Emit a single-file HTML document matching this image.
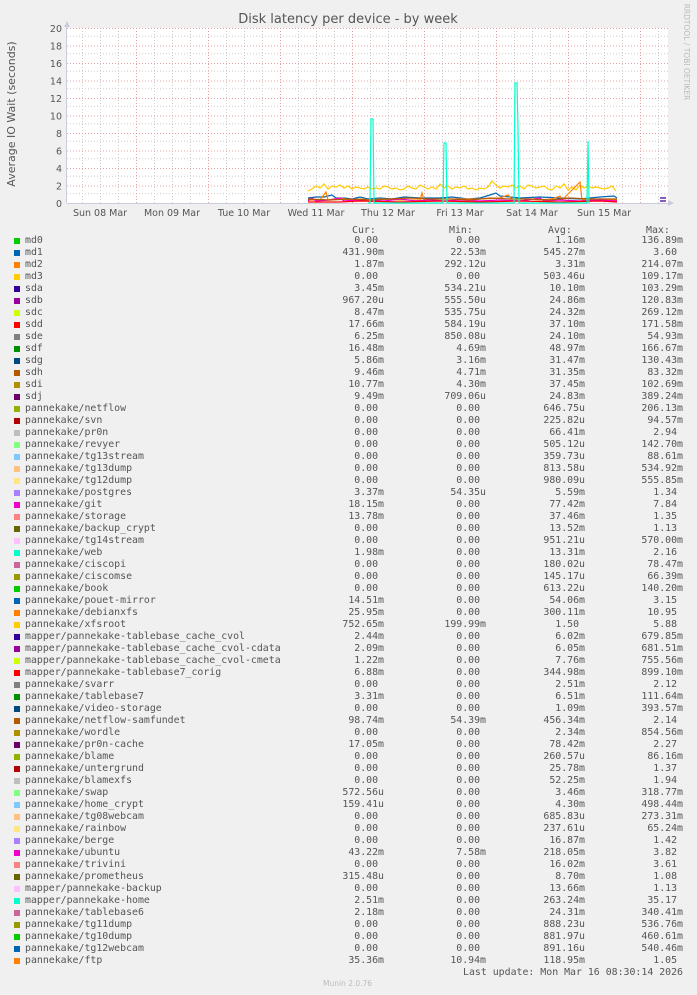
<!DOCTYPE html>
<html><head><meta charset="utf-8"><style>
html,body{margin:0;padding:0;background:#f0f0f0;}
body{width:697px;height:995px;position:relative;overflow:hidden;font-family:"DejaVu Sans Mono","Liberation Mono",monospace;font-size:9.9px;color:#555;}
svg{position:absolute;left:0;top:0}
#leg{position:absolute;left:0;top:235px;width:697px}
.r{position:relative;height:12px;line-height:12px;white-space:pre}
.r i{position:absolute;left:14px;top:3px;width:6px;height:6px}
.r b{font-weight:normal;position:absolute;left:25px}
.r s,.r u,.r q,.r em{text-decoration:none;font-style:normal;position:absolute;text-align:right}
.r s{right:313px}.r u{right:211px}.r q{right:112px}.r em{right:14px}
q:before,q:after{content:none}
.h{position:absolute;top:225px;white-space:pre}
</style></head><body>
<svg width="697" height="230" font-family="DejaVu Sans,Liberation Sans,sans-serif">
<text x="348" y="23" text-anchor="middle" font-size="13" fill="#555">Disk latency per device - by week</text>
<text transform="translate(15,114) rotate(-90)" text-anchor="middle" font-size="11" fill="#555">Average IO Wait (seconds)</text>
<text transform="translate(684,52) rotate(90)" text-anchor="middle" font-size="7.5" fill="#bbb">RRDTOOL / TOBI OETIKER</text>
<rect x="67" y="28" width="601" height="175" fill="#fff"/>
<g stroke="#ccc" stroke-width="1" stroke-dasharray="1,2">
<path d="M67 193.7H668M67 176.2H668M67 158.7H668M67 141.2H668M67 123.7H668M67 106.2H668M67 88.7H668M67 71.2H668M67 53.7H668M67 36.2H668"/>
<path d="M82.5 28V203M100.5 28V203M118.5 28V203M154.5 28V203M172.5 28V203M190.5 28V203M226.5 28V203M244.5 28V203M262.5 28V203M298.5 28V203M316.5 28V203M334.5 28V203M370.5 28V203M388.5 28V203M406.5 28V203M442.5 28V203M460.5 28V203M478.5 28V203M514.5 28V203M532.5 28V203M550.5 28V203M586.5 28V203M604.5 28V203M622.5 28V203M658.5 28V203"/>
</g>
<g stroke="#e8a0a0" stroke-width="1" stroke-dasharray="1,2">
<path d="M67 28.5H668M67 46H668M67 63.5H668M67 81H668M67 98.5H668M67 116H668M67 133.5H668M67 151H668M67 168.5H668M67 186H668"/>
<path d="M136.5 28V203M208.5 28V203M280.5 28V203M352.5 28V203M424.5 28V203M496.5 28V203M568.5 28V203M640.5 28V203"/>
</g>
<path d="M67 203.5H672M66.5 22V203" stroke="#ccd" stroke-width="1"/>
<path d="M64 27L67 21L70 27Z M668 200L674 203L668 206Z" fill="#ccd"/>
<g font-size="9.5" fill="#555" text-anchor="end">
<text x="62" y="207">0</text><text x="62" y="189.5">2</text><text x="62" y="172">4</text><text x="62" y="154.5">6</text><text x="62" y="137">8</text><text x="62" y="119.5">10</text><text x="62" y="102">12</text><text x="62" y="84.5">14</text><text x="62" y="67">16</text><text x="62" y="49.5">18</text><text x="62" y="32">20</text>
</g>
<g font-size="9.5" fill="#555" text-anchor="middle">
<text x="100" y="216">Sun 08 Mar</text><text x="172" y="216">Mon 09 Mar</text><text x="244" y="216">Tue 10 Mar</text><text x="316" y="216">Wed 11 Mar</text><text x="388" y="216">Thu 12 Mar</text><text x="460" y="216">Fri 13 Mar</text><text x="532" y="216">Sat 14 Mar</text><text x="604" y="216">Sun 15 Mar</text>
</g>
<g fill="none" stroke-width="1.2">
<polyline stroke="#FFCC00" points="308,191 312,189 316,186 320,188 324,184 328,189 332,186 336,187 340,185 344,188 348,186 352,189 356,187 360,188 364,189 368,187 372,189 376,188 380,189 384,186 388,187 392,189 396,188 400,190 404,189 408,186 412,188 416,189 420,185 424,187 428,189 432,187 436,189 440,184 444,188 448,186 452,189 456,187 460,188 464,186 468,189 472,188 476,190 480,188 484,189 488,187 492,181 496,185 500,188 504,186 508,187 512,185 516,188 520,186 524,189 528,185 532,186 536,188 540,187 544,186 548,189 552,190 556,186 560,188 564,184 568,190 572,187 576,190 580,185 584,188 588,186 592,188 596,187 600,188 604,189 608,188 612,186 616,191"/>
<polyline stroke="#0066B3" points="308,198 316,197 324,197 332,195 336,198 344,198 352,199 360,197 368,199 380,198 392,199 404,197 420,198 440,198 452,197 468,199 480,198 490,195 496,193 500,196 510,197 520,198 540,197 560,198 580,199 600,197 614,196 617,198"/>
<polyline stroke="#FF8000" points="308,200 320,200 326,192 328,200 340,198 350,200 360,199 372,200 380,199 398,200 420,200 422,193 424,200 440,199 460,199 480,199 500,198 508,195 512,199 530,199 540,200 552,199 560,196 562,200 580,182 582,200 600,199 617,200"/>
<polyline stroke="#EE00CC" points="308,201 312,198 316,201 330,200 340,198 344,201 356,200 368,200 384,201 400,199 416,201 430,200 444,201 460,200 480,201 500,200 520,201 540,198 544,201 560,200 580,201 600,200 617,201"/>
<polyline stroke="#B35A00" points="308,199 330,200 350,199 370,200 390,199 410,198 430,199 450,199 470,200 490,198 510,199 530,199 550,200 570,198 590,199 617,199"/>
<polyline stroke="#FF0000" points="308,202 340,202 360,201 400,202 440,201 480,202 520,201 560,202 600,201 617,202"/>
<polyline stroke="#00FFCC" points="368,203 370,203 371,119 373,119 374,203 443,203 444,143 446,143 447,203 514,203 515,83 517,83 518,128 519,203 587,203 588,141 589,203"/>
</g>
<path d="M660 198h6M660 201h6" stroke="#330099" stroke-width="1.2"/>
</svg>
<div class="h" style="left:352px">Cur:</div>
<div class="h" style="left:449px">Min:</div>
<div class="h" style="left:548px">Avg:</div>
<div class="h" style="left:646px">Max:</div>
<div id="leg">
<div class="r"><i style="background:#00CC00"></i><b>md0</b><s>0.00 </s><u>0.00 </u><q>1.16m</q><em>136.89m</em></div>
<div class="r"><i style="background:#0066B3"></i><b>md1</b><s>431.90m</s><u>22.53m</u><q>545.27m</q><em>3.60 </em></div>
<div class="r"><i style="background:#FF8000"></i><b>md2</b><s>1.87m</s><u>292.12u</u><q>3.31m</q><em>214.07m</em></div>
<div class="r"><i style="background:#FFCC00"></i><b>md3</b><s>0.00 </s><u>0.00 </u><q>503.46u</q><em>109.17m</em></div>
<div class="r"><i style="background:#330099"></i><b>sda</b><s>3.45m</s><u>534.21u</u><q>10.10m</q><em>103.29m</em></div>
<div class="r"><i style="background:#990099"></i><b>sdb</b><s>967.20u</s><u>555.50u</u><q>24.86m</q><em>120.83m</em></div>
<div class="r"><i style="background:#CCFF00"></i><b>sdc</b><s>8.47m</s><u>535.75u</u><q>24.32m</q><em>269.12m</em></div>
<div class="r"><i style="background:#FF0000"></i><b>sdd</b><s>17.66m</s><u>584.19u</u><q>37.10m</q><em>171.58m</em></div>
<div class="r"><i style="background:#808080"></i><b>sde</b><s>6.25m</s><u>850.08u</u><q>24.10m</q><em>54.93m</em></div>
<div class="r"><i style="background:#008F00"></i><b>sdf</b><s>16.48m</s><u>4.69m</u><q>48.97m</q><em>166.67m</em></div>
<div class="r"><i style="background:#00487D"></i><b>sdg</b><s>5.86m</s><u>3.16m</u><q>31.47m</q><em>130.43m</em></div>
<div class="r"><i style="background:#B35A00"></i><b>sdh</b><s>9.46m</s><u>4.71m</u><q>31.35m</q><em>83.32m</em></div>
<div class="r"><i style="background:#B38F00"></i><b>sdi</b><s>10.77m</s><u>4.30m</u><q>37.45m</q><em>102.69m</em></div>
<div class="r"><i style="background:#6B006B"></i><b>sdj</b><s>9.49m</s><u>709.06u</u><q>24.83m</q><em>389.24m</em></div>
<div class="r"><i style="background:#8FB300"></i><b>pannekake/netflow</b><s>0.00 </s><u>0.00 </u><q>646.75u</q><em>206.13m</em></div>
<div class="r"><i style="background:#B30000"></i><b>pannekake/svn</b><s>0.00 </s><u>0.00 </u><q>225.82u</q><em>94.57m</em></div>
<div class="r"><i style="background:#BEBEBE"></i><b>pannekake/pr0n</b><s>0.00 </s><u>0.00 </u><q>66.41m</q><em>2.94 </em></div>
<div class="r"><i style="background:#80FF80"></i><b>pannekake/revyer</b><s>0.00 </s><u>0.00 </u><q>505.12u</q><em>142.70m</em></div>
<div class="r"><i style="background:#80C9FF"></i><b>pannekake/tg13stream</b><s>0.00 </s><u>0.00 </u><q>359.73u</q><em>88.61m</em></div>
<div class="r"><i style="background:#FFC080"></i><b>pannekake/tg13dump</b><s>0.00 </s><u>0.00 </u><q>813.58u</q><em>534.92m</em></div>
<div class="r"><i style="background:#FFE680"></i><b>pannekake/tg12dump</b><s>0.00 </s><u>0.00 </u><q>980.09u</q><em>555.85m</em></div>
<div class="r"><i style="background:#AA80FF"></i><b>pannekake/postgres</b><s>3.37m</s><u>54.35u</u><q>5.59m</q><em>1.34 </em></div>
<div class="r"><i style="background:#EE00CC"></i><b>pannekake/git</b><s>18.15m</s><u>0.00 </u><q>77.42m</q><em>7.84 </em></div>
<div class="r"><i style="background:#FF8080"></i><b>pannekake/storage</b><s>13.78m</s><u>0.00 </u><q>37.46m</q><em>1.35 </em></div>
<div class="r"><i style="background:#666600"></i><b>pannekake/backup_crypt</b><s>0.00 </s><u>0.00 </u><q>13.52m</q><em>1.13 </em></div>
<div class="r"><i style="background:#FFBFFF"></i><b>pannekake/tg14stream</b><s>0.00 </s><u>0.00 </u><q>951.21u</q><em>570.00m</em></div>
<div class="r"><i style="background:#00FFCC"></i><b>pannekake/web</b><s>1.98m</s><u>0.00 </u><q>13.31m</q><em>2.16 </em></div>
<div class="r"><i style="background:#CC6699"></i><b>pannekake/ciscopi</b><s>0.00 </s><u>0.00 </u><q>180.02u</q><em>78.47m</em></div>
<div class="r"><i style="background:#999900"></i><b>pannekake/ciscomse</b><s>0.00 </s><u>0.00 </u><q>145.17u</q><em>66.39m</em></div>
<div class="r"><i style="background:#00CC00"></i><b>pannekake/book</b><s>0.00 </s><u>0.00 </u><q>613.22u</q><em>140.20m</em></div>
<div class="r"><i style="background:#0066B3"></i><b>pannekake/pouet-mirror</b><s>14.51m</s><u>0.00 </u><q>54.06m</q><em>3.15 </em></div>
<div class="r"><i style="background:#FF8000"></i><b>pannekake/debianxfs</b><s>25.95m</s><u>0.00 </u><q>300.11m</q><em>10.95 </em></div>
<div class="r"><i style="background:#FFCC00"></i><b>pannekake/xfsroot</b><s>752.65m</s><u>199.99m</u><q>1.50 </q><em>5.88 </em></div>
<div class="r"><i style="background:#330099"></i><b>mapper/pannekake-tablebase_cache_cvol</b><s>2.44m</s><u>0.00 </u><q>6.02m</q><em>679.85m</em></div>
<div class="r"><i style="background:#990099"></i><b>mapper/pannekake-tablebase_cache_cvol-cdata</b><s>2.09m</s><u>0.00 </u><q>6.05m</q><em>681.51m</em></div>
<div class="r"><i style="background:#CCFF00"></i><b>mapper/pannekake-tablebase_cache_cvol-cmeta</b><s>1.22m</s><u>0.00 </u><q>7.76m</q><em>755.56m</em></div>
<div class="r"><i style="background:#FF0000"></i><b>mapper/pannekake-tablebase7_corig</b><s>6.88m</s><u>0.00 </u><q>344.98m</q><em>899.10m</em></div>
<div class="r"><i style="background:#808080"></i><b>pannekake/svarr</b><s>0.00 </s><u>0.00 </u><q>2.51m</q><em>2.12 </em></div>
<div class="r"><i style="background:#008F00"></i><b>pannekake/tablebase7</b><s>3.31m</s><u>0.00 </u><q>6.51m</q><em>111.64m</em></div>
<div class="r"><i style="background:#00487D"></i><b>pannekake/video-storage</b><s>0.00 </s><u>0.00 </u><q>1.09m</q><em>393.57m</em></div>
<div class="r"><i style="background:#B35A00"></i><b>pannekake/netflow-samfundet</b><s>98.74m</s><u>54.39m</u><q>456.34m</q><em>2.14 </em></div>
<div class="r"><i style="background:#B38F00"></i><b>pannekake/wordle</b><s>0.00 </s><u>0.00 </u><q>2.34m</q><em>854.56m</em></div>
<div class="r"><i style="background:#6B006B"></i><b>pannekake/pr0n-cache</b><s>17.05m</s><u>0.00 </u><q>78.42m</q><em>2.27 </em></div>
<div class="r"><i style="background:#8FB300"></i><b>pannekake/blame</b><s>0.00 </s><u>0.00 </u><q>260.57u</q><em>86.16m</em></div>
<div class="r"><i style="background:#B30000"></i><b>pannekake/untergrund</b><s>0.00 </s><u>0.00 </u><q>25.78m</q><em>1.37 </em></div>
<div class="r"><i style="background:#BEBEBE"></i><b>pannekake/blamexfs</b><s>0.00 </s><u>0.00 </u><q>52.25m</q><em>1.94 </em></div>
<div class="r"><i style="background:#80FF80"></i><b>pannekake/swap</b><s>572.56u</s><u>0.00 </u><q>3.46m</q><em>318.77m</em></div>
<div class="r"><i style="background:#80C9FF"></i><b>pannekake/home_crypt</b><s>159.41u</s><u>0.00 </u><q>4.30m</q><em>498.44m</em></div>
<div class="r"><i style="background:#FFC080"></i><b>pannekake/tg08webcam</b><s>0.00 </s><u>0.00 </u><q>685.83u</q><em>273.31m</em></div>
<div class="r"><i style="background:#FFE680"></i><b>pannekake/rainbow</b><s>0.00 </s><u>0.00 </u><q>237.61u</q><em>65.24m</em></div>
<div class="r"><i style="background:#AA80FF"></i><b>pannekake/berge</b><s>0.00 </s><u>0.00 </u><q>16.87m</q><em>1.42 </em></div>
<div class="r"><i style="background:#EE00CC"></i><b>pannekake/ubuntu</b><s>43.22m</s><u>7.58m</u><q>218.05m</q><em>3.82 </em></div>
<div class="r"><i style="background:#FF8080"></i><b>pannekake/trivini</b><s>0.00 </s><u>0.00 </u><q>16.02m</q><em>3.61 </em></div>
<div class="r"><i style="background:#666600"></i><b>pannekake/prometheus</b><s>315.48u</s><u>0.00 </u><q>8.70m</q><em>1.08 </em></div>
<div class="r"><i style="background:#FFBFFF"></i><b>mapper/pannekake-backup</b><s>0.00 </s><u>0.00 </u><q>13.66m</q><em>1.13 </em></div>
<div class="r"><i style="background:#00FFCC"></i><b>mapper/pannekake-home</b><s>2.51m</s><u>0.00 </u><q>263.24m</q><em>35.17 </em></div>
<div class="r"><i style="background:#CC6699"></i><b>pannekake/tablebase6</b><s>2.18m</s><u>0.00 </u><q>24.31m</q><em>340.41m</em></div>
<div class="r"><i style="background:#999900"></i><b>pannekake/tg11dump</b><s>0.00 </s><u>0.00 </u><q>888.23u</q><em>536.76m</em></div>
<div class="r"><i style="background:#00CC00"></i><b>pannekake/tg10dump</b><s>0.00 </s><u>0.00 </u><q>881.97u</q><em>460.61m</em></div>
<div class="r"><i style="background:#0066B3"></i><b>pannekake/tg12webcam</b><s>0.00 </s><u>0.00 </u><q>891.16u</q><em>540.46m</em></div>
<div class="r"><i style="background:#FF8000"></i><b>pannekake/ftp</b><s>35.36m</s><u>10.94m</u><q>118.95m</q><em>1.05 </em></div>
<div class="r"><em>Last update: Mon Mar 16 08:30:14 2026</em></div>
</div>
<div style="position:absolute;left:323px;top:979px;font-family:'DejaVu Sans',sans-serif;font-size:7.5px;color:#bbb">Munin 2.0.76</div>
</body></html>
